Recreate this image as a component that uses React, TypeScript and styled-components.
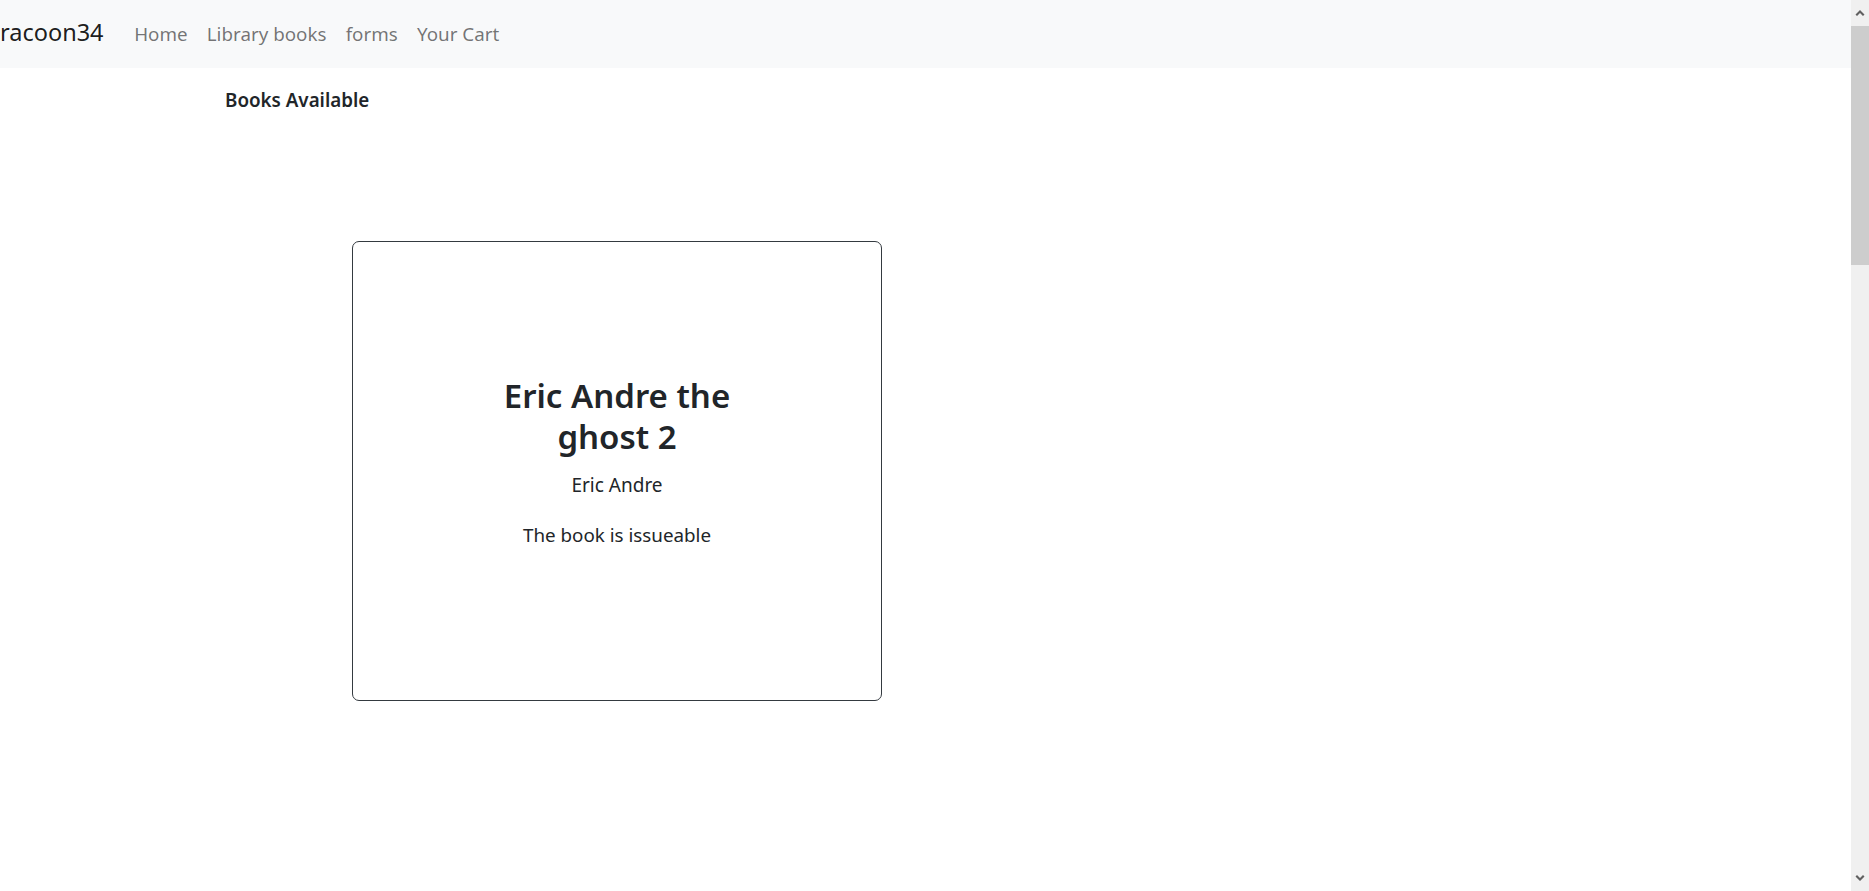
import styled, { createGlobalStyle } from 'styled-components';

const books = [{ title: 'Eric Andre the ghost 2', author: 'Eric Andre', issueable: true }];

const GlobalStyle = createGlobalStyle`
  html, body {
    margin: 0;
    padding: 0;
    overflow: hidden;
    background: #fff;
  }
  body {
    font-family: 'Noto Sans', 'Open Sans', 'Liberation Sans', sans-serif;
    color: #212529;
  }
  * {
    box-sizing: border-box;
  }
`;

export default function App() {
  return (
    <>
      <GlobalStyle />
      <Page>
        <Navbar>
          <Brand>racoon34</Brand>
          <NavList>
            <NavLink>Home</NavLink>
            <NavLink>Library books</NavLink>
            <NavLink>forms</NavLink>
            <NavLink>Your Cart</NavLink>
          </NavList>
        </Navbar>
        <Content>
          <Heading>Books Available</Heading>
          <CardGrid>
            {books.map((book) => (
              <Card key={book.title}>
                <CardBody>
                  <CardTitle>{book.title}</CardTitle>
                  <CardAuthor>{book.author}</CardAuthor>
                  <CardText>{book.issueable ? 'The book is issueable' : 'Not issueable'}</CardText>
                </CardBody>
              </Card>
            ))}
          </CardGrid>
        </Content>
      </Page>
      <Scrollbar>
        <ScrollButton>
          <svg width='10' height='8' viewBox='0 0 10 8'>
            <path d='M5 1 L9.5 5.5 L8 7 L5 4 L2 7 L0.5 5.5 Z' fill='#606060' />
          </svg>
        </ScrollButton>
        <ScrollThumb />
        <ScrollTrack />
        <ScrollButton>
          <svg width='10' height='8' viewBox='0 0 10 8'>
            <path d='M5 7 L9.5 2.5 L8 1 L5 4 L2 1 L0.5 2.5 Z' fill='#606060' />
          </svg>
        </ScrollButton>
      </Scrollbar>
    </>
  );
}

const Page = styled.div`
  width: 1851px;
  min-height: 891px;
`;

const Navbar = styled.nav`
  display: flex;
  align-items: center;
  height: 68px;
  background-color: #f8f9fa;
  padding: 0;
`;

const Brand = styled.a`
  font-size: 23.5px;
  color: rgba(0, 0, 0, 0.9);
  margin-right: 21px;
  line-height: 1.5;
  margin-top: -2px;
`;

const NavList = styled.div`
  display: flex;
  align-items: center;
`;

const NavLink = styled.a`
  font-size: 18.8px;
  color: rgba(0, 0, 0, 0.55);
  padding: 9.6px 9.6px;
  line-height: 1.5;
`;

const Content = styled.main`
  padding: 21px 0 0 225px;
`;

const Heading = styled.h6`
  margin: 0;
  font-size: 18.8px;
  font-weight: 600;
  line-height: 1.2;
  color: #212529;
`;

const CardGrid = styled.div`
  display: flex;
  padding: 129px 0 0 127px;
`;

const Card = styled.div`
  width: 530px;
  height: 460px;
  border: 1px solid #343a40;
  border-radius: 7px;
  display: flex;
  align-items: center;
  justify-content: center;
`;

const CardBody = styled.div`
  width: 260px;
  text-align: center;
  margin-top: -15px;
`;

const CardTitle = styled.h3`
  margin: 0 0 14px;
  font-size: 33px;
  font-weight: 600;
  line-height: 1.22;
  color: #212529;
`;

const CardAuthor = styled.div`
  font-size: 19px;
  line-height: 1.5;
`;

const CardText = styled.p`
  margin: 22px 0 0;
  font-size: 18.8px;
  line-height: 1.5;
`;

const Scrollbar = styled.div`
  position: fixed;
  top: 0;
  right: 0;
  width: 18px;
  height: 891px;
  background: #f0f0f0;
  display: flex;
  flex-direction: column;
`;

const ScrollButton = styled.div`
  height: 26px;
  display: flex;
  align-items: center;
  justify-content: center;
`;

const ScrollThumb = styled.div`
  height: 239px;
  background: #cdcdcd;
`;

const ScrollTrack = styled.div`
  flex: 1;
`;
